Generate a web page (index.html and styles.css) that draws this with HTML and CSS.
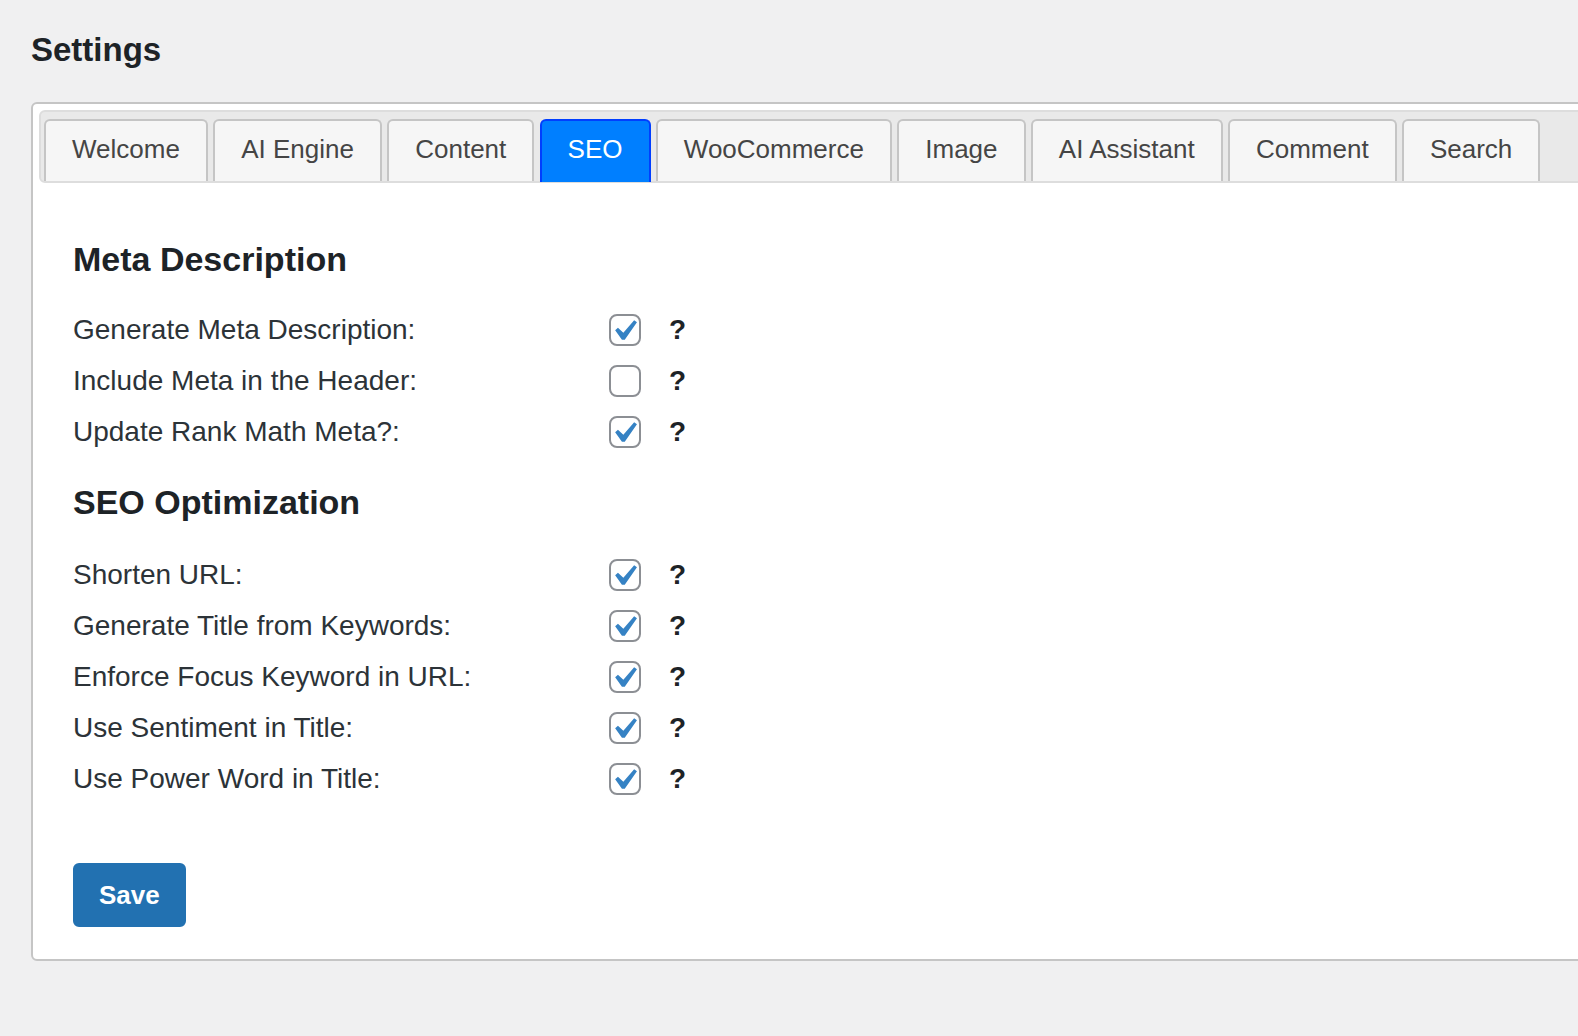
FILE: index.html
```html
<!DOCTYPE html>
<html lang="en">
<head>
<meta charset="utf-8">
<title>Settings</title>
<link rel="stylesheet" href="styles.css">
</head>
<body>
<div class="wrap">
  <h1 class="page-title">Settings</h1>
  <div class="card">
    <ul class="tabs">
      <li class="tab">Welcome</li>
      <li class="tab">AI Engine</li>
      <li class="tab">Content</li>
      <li class="tab active">SEO</li>
      <li class="tab">WooCommerce</li>
      <li class="tab">Image</li>
      <li class="tab">AI Assistant</li>
      <li class="tab">Comment</li>
      <li class="tab">Search</li>
    </ul>
    <div class="panel">
      <h2 class="section-title">Meta Description</h2>
      <div class="rows">
        <div class="row"><span class="label">Generate Meta Description:</span><span class="cb checked"><svg viewBox="0 0 20 20"><path d="M14.83 4.89l1.34.94-5.81 8.38H9.02L5.78 9.67l1.34-1.25 2.57 2.4z"/></svg></span><span class="help">?</span></div>
        <div class="row"><span class="label">Include Meta in the Header:</span><span class="cb"></span><span class="help">?</span></div>
        <div class="row"><span class="label">Update Rank Math Meta?:</span><span class="cb checked"><svg viewBox="0 0 20 20"><path d="M14.83 4.89l1.34.94-5.81 8.38H9.02L5.78 9.67l1.34-1.25 2.57 2.4z"/></svg></span><span class="help">?</span></div>
      </div>
      <h2 class="section-title second">SEO Optimization</h2>
      <div class="rows">
        <div class="row"><span class="label">Shorten URL:</span><span class="cb checked"><svg viewBox="0 0 20 20"><path d="M14.83 4.89l1.34.94-5.81 8.38H9.02L5.78 9.67l1.34-1.25 2.57 2.4z"/></svg></span><span class="help">?</span></div>
        <div class="row"><span class="label">Generate Title from Keywords:</span><span class="cb checked"><svg viewBox="0 0 20 20"><path d="M14.83 4.89l1.34.94-5.81 8.38H9.02L5.78 9.67l1.34-1.25 2.57 2.4z"/></svg></span><span class="help">?</span></div>
        <div class="row"><span class="label">Enforce Focus Keyword in URL:</span><span class="cb checked"><svg viewBox="0 0 20 20"><path d="M14.83 4.89l1.34.94-5.81 8.38H9.02L5.78 9.67l1.34-1.25 2.57 2.4z"/></svg></span><span class="help">?</span></div>
        <div class="row"><span class="label">Use Sentiment in Title:</span><span class="cb checked"><svg viewBox="0 0 20 20"><path d="M14.83 4.89l1.34.94-5.81 8.38H9.02L5.78 9.67l1.34-1.25 2.57 2.4z"/></svg></span><span class="help">?</span></div>
        <div class="row"><span class="label">Use Power Word in Title:</span><span class="cb checked"><svg viewBox="0 0 20 20"><path d="M14.83 4.89l1.34.94-5.81 8.38H9.02L5.78 9.67l1.34-1.25 2.57 2.4z"/></svg></span><span class="help">?</span></div>
      </div>
      <button class="save" type="button">Save</button>
    </div>
  </div>
</div>
</body>
</html>
```

FILE: styles.css
```css
html, body {
  margin: 0;
  padding: 0;
  overflow: hidden;
  background: #f0f0f1;
}
body {
  font-family: "Liberation Sans", Arial, Helvetica, sans-serif;
  color: #3c434a;
}
.wrap {
  padding: 30px 0 0 31px;
}
.page-title {
  margin: 0 0 32px 0;
  font-size: 33px;
  line-height: 40px;
  font-weight: 700;
  color: #1d2327;
}
.card {
  width: 1620px;
  box-sizing: border-box;
  background: #fff;
  border: 2px solid #c5c5c5;
  border-radius: 6px;
  padding: 6px;
}
.tabs {
  list-style: none;
  margin: 0;
  padding: 7px 4px 0 3px;
  display: flex;
  align-items: flex-start;
  gap: 5.3px;
  background: #e9e9e9;
  border: 2px solid #dddddd;
  border-radius: 6px;
}
.tab {
  box-sizing: border-box;
  height: 62px;
  line-height: 57px;
  padding: 0 26px;
  font-size: 26px;
  color: #454545;
  background: #f6f6f6;
  border: 2px solid #c5c5c5;
  border-bottom: 0;
  border-radius: 6px 6px 0 0;
  white-space: nowrap;
}
.tab.active {
  height: 63px;
  margin-bottom: -1px;
  background: #007fff;
  border-color: #003eff;
  color: #fff;
}
.panel {
  padding: 56px 34px 26px 34px;
}
.section-title {
  margin: 0 0 25px 0;
  font-size: 34px;
  line-height: 40px;
  font-weight: 700;
  color: #1d2327;
}
.section-title.second {
  margin-top: 25px;
  margin-bottom: 27px;
}
.row {
  display: flex;
  align-items: center;
  height: 51px;
}
.label {
  width: 536px;
  flex: none;
  font-size: 28px;
  color: #2c3338;
}
.cb {
  position: relative;
  box-sizing: border-box;
  width: 32px;
  height: 32px;
  flex: none;
  border: 2px solid #8c8f94;
  border-radius: 8px;
  background: #fff;
}
.cb svg {
  position: absolute;
  left: -8px;
  top: -6px;
  width: 42px;
  height: 42px;
  fill: #3582c4;
}
.help {
  margin-left: 28px;
  font-size: 28px;
  font-weight: 700;
  color: #1d2327;
}
.save {
  display: block;
  margin-top: 59px;
  height: 64px;
  padding: 0 24px;
  font-family: "Liberation Sans", Arial, sans-serif;
  font-size: 26px;
  font-weight: 700;
  color: #fff;
  background: #2271b1;
  border: 2px solid #2271b1;
  border-radius: 6px;
  cursor: pointer;
}
```
